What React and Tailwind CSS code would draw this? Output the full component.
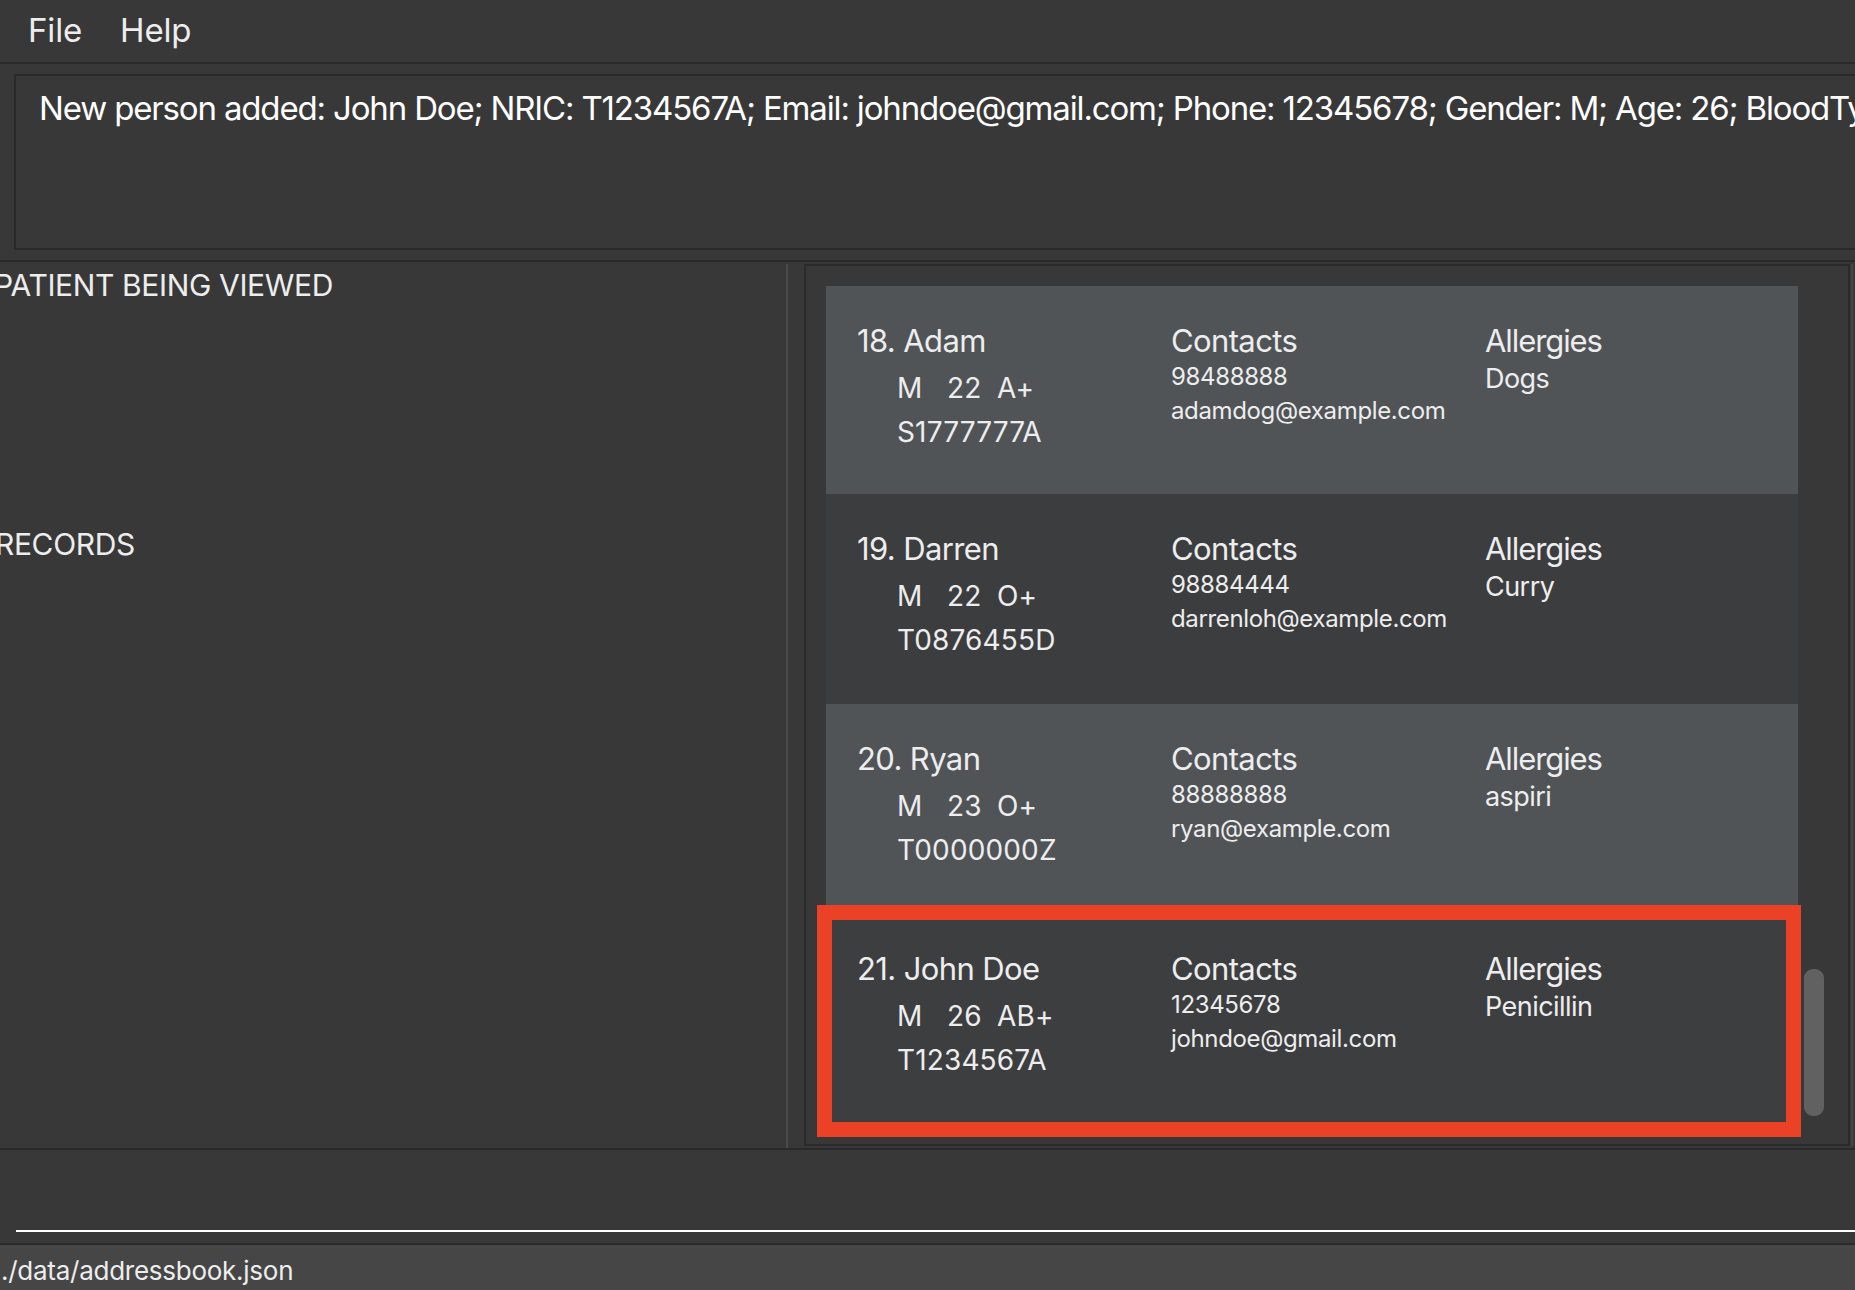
const patients = [
  {
    id: 18,
    name: "Adam",
    gender: "M",
    age: "22",
    blood: "A+",
    nric: "S1777777A",
    phone: "98488888",
    email: "adamdog@example.com",
    allergy: "Dogs",
    tone: "bg-[#505457]",
    height: "h-[208px]",
  },
  {
    id: 19,
    name: "Darren",
    gender: "M",
    age: "22",
    blood: "O+",
    nric: "T0876455D",
    phone: "98884444",
    email: "darrenloh@example.com",
    allergy: "Curry",
    tone: "bg-[#3c3d3f]",
    height: "h-[210px]",
  },
  {
    id: 20,
    name: "Ryan",
    gender: "M",
    age: "23",
    blood: "O+",
    nric: "T0000000Z",
    phone: "88888888",
    email: "ryan@example.com",
    allergy: "aspiri",
    tone: "bg-[#505457]",
    height: "h-[201px]",
  },
];

const selected = {
  id: 21,
  name: "John Doe",
  gender: "M",
  age: "26",
  blood: "AB+",
  nric: "T1234567A",
  phone: "12345678",
  email: "johndoe@gmail.com",
  allergy: "Penicillin",
};

function CardBody({ p }) {
  return (
    <div className="grid grid-cols-[314px_314px_1fr]">
      <div>
        <div className="text-[31px] leading-[31px] tracking-[-0.02em]">
          {p.id}. {p.name}
        </div>
        <div className="mt-[10px] pl-[40px] text-[28px] leading-[44px] tracking-[0.005em]">
          <div className="flex">
            <span className="w-[50px]">{p.gender}</span>
            <span className="w-[50px]">{p.age}</span>
            <span>{p.blood}</span>
          </div>
          <div>{p.nric}</div>
        </div>
      </div>
      <div>
        <div className="text-[31px] leading-[31px] tracking-[-0.02em]">Contacts</div>
        <div className="mt-[4px] text-[24px] leading-[34px] tracking-[-0.015em]">
          <div>{p.phone}</div>
          <div>{p.email}</div>
        </div>
      </div>
      <div>
        <div className="text-[31px] leading-[31px] tracking-[-0.035em]">Allergies</div>
        <div className="mt-[7px] text-[27px] leading-[31px] tracking-[-0.02em]">{p.allergy}</div>
      </div>
    </div>
  );
}

export default function App() {
  return (
    <div
      className="flex h-[1290px] w-[1855px] flex-col overflow-hidden bg-[#383838] text-[#ededed]"
      style={{ fontFamily: "Inter, 'Noto Sans', sans-serif" }}
    >
      {/* menu bar */}
      <div className="flex h-[64px] shrink-0 items-start gap-[38px] border-b-2 border-[#2a2a2a] pl-[28px] pt-[14px] text-[33px] leading-[33px] tracking-[-0.005em]">
        <span>File</span>
        <span>Help</span>
      </div>

      {/* result display */}
      <div className="h-[198px] shrink-0 border-b-2 border-[#2a2a2a] pb-[10px] pl-[14px] pt-[10px]">
        <div className="h-[176px] overflow-hidden border-y-2 border-l-2 border-[#2a2a2a] pl-[23px] pt-[16px]">
          <div className="whitespace-nowrap text-[33px] leading-[33px] tracking-[-0.035em] text-white">
            New person added: John Doe; NRIC: T1234567A; Email: johndoe@gmail.com; Phone: 12345678; Gender: M; Age: 26; BloodType: AB+; Allergies: Penicillin
          </div>
        </div>
      </div>

      {/* main area */}
      <div className="flex h-[886px] shrink-0">
        <div className="w-[786px] shrink-0 pt-[8px]">
          <div className="-ml-[6px] text-[30px] leading-[30px] tracking-[-0.012em]">
            PATIENT BEING VIEWED
          </div>
          <div className="-ml-[5px] mt-[229px] text-[30px] leading-[30px] tracking-[-0.012em]">
            RECORDS
          </div>
        </div>
        <div className="mt-[2px] w-[2px] shrink-0 bg-[#4b4b4b]" />
        <div className="my-[2px] ml-[16px] flex w-[1046px] shrink-0 border-2 border-[#2a2a2a]">
          <div className="flex w-[984px] flex-col pl-[20px] pt-[20px]">
            {patients.map((p) => (
              <div key={p.id} className={`${p.tone} ${p.height} w-[972px] pl-[31px] pt-[39px]`}>
                <CardBody p={p} />
              </div>
            ))}
            <div className="-ml-[9px] h-[232px] w-[984px] border-[15px] border-[#eb4127] bg-[#3d3e40] pl-[25px] pt-[33px]">
              <CardBody p={selected} />
            </div>
          </div>
          <div className="ml-[14px] flex w-[20px] flex-col justify-end pb-[28px]">
            <div className="h-[147px] w-[20px] rounded-[9px] bg-[#616161]" />
          </div>
        </div>
        <div className="my-[2px] ml-[1px] w-[2px] shrink-0 bg-[#464646]" />
      </div>

      {/* command box */}
      <div className="h-[97px] shrink-0 border-y-2 border-[#2a2a2a] pl-[16px] pt-[80px]">
        <div className="h-[2px] bg-white" />
      </div>

      {/* status bar */}
      <div className="flex-1 bg-[#464646] pl-[1px] pt-[13px] text-[26px] leading-[26px] tracking-[-0.01em]">
        ./data/addressbook.json
      </div>
    </div>
  );
}
